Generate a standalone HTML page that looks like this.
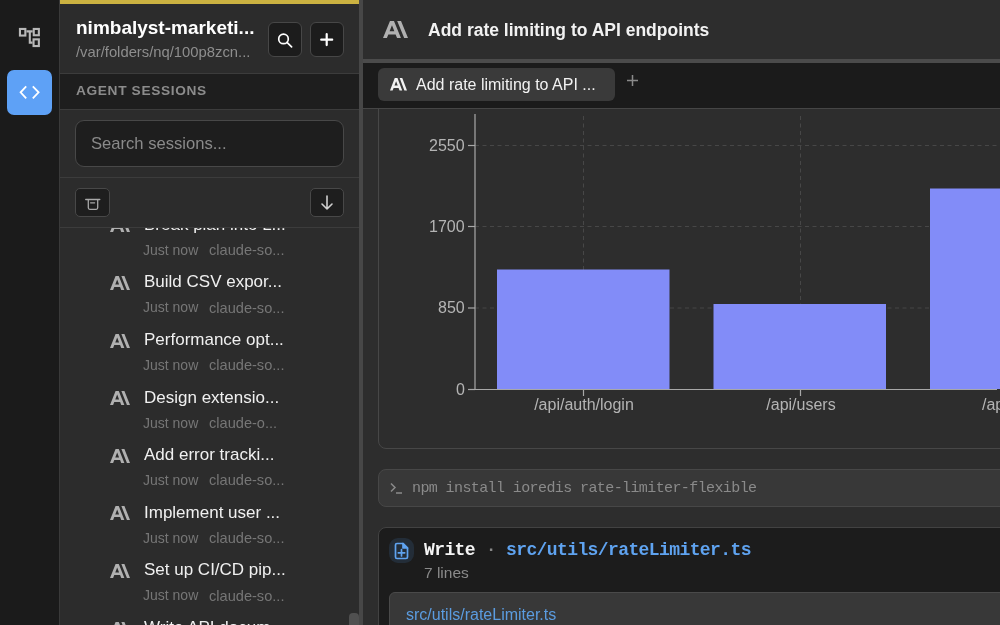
<!DOCTYPE html>
<html><head><meta charset="utf-8">
<style>
*{margin:0;padding:0;box-sizing:border-box}
html,body{width:1000px;height:625px;overflow:hidden;background:#2d2d2d;font-family:"Liberation Sans",sans-serif}
.a{position:absolute}
.nw{white-space:nowrap;will-change:transform}
</style></head><body>
<div class="a" style="left:0px;top:0px;width:59px;height:625px;background:#1b1b1b;"></div>
<div class="a" style="left:59px;top:0px;width:1px;height:625px;background:#3a3a3a;"></div>
<svg class="a" style="left:15px;top:24px" width="30" height="28" viewBox="15 24 30 28" fill="none" stroke="#b8b8b8" stroke-width="2.1">
<rect x="19.95" y="28.95" width="5.4" height="6.6"/><rect x="33.75" y="28.95" width="5.1" height="6.3"/><rect x="33.55" y="39.35" width="5.3" height="6.7"/>
<path d="M26.5 31.4H32.7M29.8 31.4V42.6H32.5"/></svg>
<div class="a" style="left:7px;top:70px;width:45px;height:45px;background:#5ea1f6;border-radius:7px"></div>
<svg class="a" style="left:19px;top:84px" width="22" height="17" viewBox="0 0 22 17" fill="none" stroke="#fff" stroke-width="1.8" stroke-linejoin="miter">
<path d="M7.2 2.3L1.6 8.3L7.2 14.3M13.8 2.3L19.6 8.3L13.8 14.3"/></svg>
<div class="a" style="left:60px;top:0px;width:299px;height:625px;background:#2c2c2c;"></div>
<svg class="a" style="left:110px;top:218.4px" width="20" height="14" viewBox="0 3.541 24 16.918" preserveAspectRatio="none"><path fill="#b0b0b0" d="M17.3041 3.541h-3.6718l6.696 16.918H24Zm-10.6082 0L0 20.459h3.7442l1.3693-3.5527h7.0052l1.3693 3.5528h3.7442L10.5363 3.5409Zm-.3712 10.2232 2.2914-5.9456 2.2914 5.9456Z"/></svg>
<div class="a nw" style="left:143.50px;top:214.71px;font-family:'Liberation Sans',sans-serif;font-size:17px;line-height:20px;font-weight:normal;color:#f0f0f0;">Break plan into L...</div>
<div class="a nw" style="left:143.20px;top:241.75px;font-family:'Liberation Sans',sans-serif;font-size:14px;line-height:17px;font-weight:normal;color:#767676;">Just now</div>
<div class="a nw" style="left:209.00px;top:241.04px;font-family:'Liberation Sans',sans-serif;font-size:14.6px;line-height:18px;font-weight:normal;color:#767676;">claude-so...</div>
<svg class="a" style="left:110px;top:276.0px" width="20" height="14" viewBox="0 3.541 24 16.918" preserveAspectRatio="none"><path fill="#b0b0b0" d="M17.3041 3.541h-3.6718l6.696 16.918H24Zm-10.6082 0L0 20.459h3.7442l1.3693-3.5527h7.0052l1.3693 3.5528h3.7442L10.5363 3.5409Zm-.3712 10.2232 2.2914-5.9456 2.2914 5.9456Z"/></svg>
<div class="a nw" style="left:143.50px;top:272.31px;font-family:'Liberation Sans',sans-serif;font-size:17px;line-height:20px;font-weight:normal;color:#f0f0f0;">Build CSV expor...</div>
<div class="a nw" style="left:143.20px;top:299.35px;font-family:'Liberation Sans',sans-serif;font-size:14px;line-height:17px;font-weight:normal;color:#767676;">Just now</div>
<div class="a nw" style="left:209.00px;top:298.64px;font-family:'Liberation Sans',sans-serif;font-size:14.6px;line-height:18px;font-weight:normal;color:#767676;">claude-so...</div>
<svg class="a" style="left:110px;top:333.6px" width="20" height="14" viewBox="0 3.541 24 16.918" preserveAspectRatio="none"><path fill="#b0b0b0" d="M17.3041 3.541h-3.6718l6.696 16.918H24Zm-10.6082 0L0 20.459h3.7442l1.3693-3.5527h7.0052l1.3693 3.5528h3.7442L10.5363 3.5409Zm-.3712 10.2232 2.2914-5.9456 2.2914 5.9456Z"/></svg>
<div class="a nw" style="left:143.50px;top:329.91px;font-family:'Liberation Sans',sans-serif;font-size:17px;line-height:20px;font-weight:normal;color:#f0f0f0;">Performance opt...</div>
<div class="a nw" style="left:143.20px;top:356.95px;font-family:'Liberation Sans',sans-serif;font-size:14px;line-height:17px;font-weight:normal;color:#767676;">Just now</div>
<div class="a nw" style="left:209.00px;top:356.24px;font-family:'Liberation Sans',sans-serif;font-size:14.6px;line-height:18px;font-weight:normal;color:#767676;">claude-so...</div>
<svg class="a" style="left:110px;top:391.2px" width="20" height="14" viewBox="0 3.541 24 16.918" preserveAspectRatio="none"><path fill="#b0b0b0" d="M17.3041 3.541h-3.6718l6.696 16.918H24Zm-10.6082 0L0 20.459h3.7442l1.3693-3.5527h7.0052l1.3693 3.5528h3.7442L10.5363 3.5409Zm-.3712 10.2232 2.2914-5.9456 2.2914 5.9456Z"/></svg>
<div class="a nw" style="left:143.50px;top:387.51px;font-family:'Liberation Sans',sans-serif;font-size:17px;line-height:20px;font-weight:normal;color:#f0f0f0;">Design extensio...</div>
<div class="a nw" style="left:143.20px;top:414.55px;font-family:'Liberation Sans',sans-serif;font-size:14px;line-height:17px;font-weight:normal;color:#767676;">Just now</div>
<div class="a nw" style="left:209.00px;top:413.84px;font-family:'Liberation Sans',sans-serif;font-size:14.6px;line-height:18px;font-weight:normal;color:#767676;">claude-o...</div>
<svg class="a" style="left:110px;top:448.8px" width="20" height="14" viewBox="0 3.541 24 16.918" preserveAspectRatio="none"><path fill="#b0b0b0" d="M17.3041 3.541h-3.6718l6.696 16.918H24Zm-10.6082 0L0 20.459h3.7442l1.3693-3.5527h7.0052l1.3693 3.5528h3.7442L10.5363 3.5409Zm-.3712 10.2232 2.2914-5.9456 2.2914 5.9456Z"/></svg>
<div class="a nw" style="left:143.50px;top:445.11px;font-family:'Liberation Sans',sans-serif;font-size:17px;line-height:20px;font-weight:normal;color:#f0f0f0;">Add error tracki...</div>
<div class="a nw" style="left:143.20px;top:472.15px;font-family:'Liberation Sans',sans-serif;font-size:14px;line-height:17px;font-weight:normal;color:#767676;">Just now</div>
<div class="a nw" style="left:209.00px;top:471.44px;font-family:'Liberation Sans',sans-serif;font-size:14.6px;line-height:18px;font-weight:normal;color:#767676;">claude-so...</div>
<svg class="a" style="left:110px;top:506.4px" width="20" height="14" viewBox="0 3.541 24 16.918" preserveAspectRatio="none"><path fill="#b0b0b0" d="M17.3041 3.541h-3.6718l6.696 16.918H24Zm-10.6082 0L0 20.459h3.7442l1.3693-3.5527h7.0052l1.3693 3.5528h3.7442L10.5363 3.5409Zm-.3712 10.2232 2.2914-5.9456 2.2914 5.9456Z"/></svg>
<div class="a nw" style="left:143.50px;top:502.71px;font-family:'Liberation Sans',sans-serif;font-size:17px;line-height:20px;font-weight:normal;color:#f0f0f0;">Implement user ...</div>
<div class="a nw" style="left:143.20px;top:529.75px;font-family:'Liberation Sans',sans-serif;font-size:14px;line-height:17px;font-weight:normal;color:#767676;">Just now</div>
<div class="a nw" style="left:209.00px;top:529.04px;font-family:'Liberation Sans',sans-serif;font-size:14.6px;line-height:18px;font-weight:normal;color:#767676;">claude-so...</div>
<svg class="a" style="left:110px;top:564.0px" width="20" height="14" viewBox="0 3.541 24 16.918" preserveAspectRatio="none"><path fill="#b0b0b0" d="M17.3041 3.541h-3.6718l6.696 16.918H24Zm-10.6082 0L0 20.459h3.7442l1.3693-3.5527h7.0052l1.3693 3.5528h3.7442L10.5363 3.5409Zm-.3712 10.2232 2.2914-5.9456 2.2914 5.9456Z"/></svg>
<div class="a nw" style="left:143.50px;top:560.31px;font-family:'Liberation Sans',sans-serif;font-size:17px;line-height:20px;font-weight:normal;color:#f0f0f0;">Set up CI/CD pip...</div>
<div class="a nw" style="left:143.20px;top:587.35px;font-family:'Liberation Sans',sans-serif;font-size:14px;line-height:17px;font-weight:normal;color:#767676;">Just now</div>
<div class="a nw" style="left:209.00px;top:586.64px;font-family:'Liberation Sans',sans-serif;font-size:14.6px;line-height:18px;font-weight:normal;color:#767676;">claude-so...</div>
<svg class="a" style="left:110px;top:621.6px" width="20" height="14" viewBox="0 3.541 24 16.918" preserveAspectRatio="none"><path fill="#b0b0b0" d="M17.3041 3.541h-3.6718l6.696 16.918H24Zm-10.6082 0L0 20.459h3.7442l1.3693-3.5527h7.0052l1.3693 3.5528h3.7442L10.5363 3.5409Zm-.3712 10.2232 2.2914-5.9456 2.2914 5.9456Z"/></svg>
<div class="a nw" style="left:143.50px;top:617.91px;font-family:'Liberation Sans',sans-serif;font-size:17px;line-height:20px;font-weight:normal;color:#f0f0f0;">Write API docum...</div>
<div class="a nw" style="left:143.20px;top:644.95px;font-family:'Liberation Sans',sans-serif;font-size:14px;line-height:17px;font-weight:normal;color:#767676;">Just now</div>
<div class="a nw" style="left:209.00px;top:644.24px;font-family:'Liberation Sans',sans-serif;font-size:14.6px;line-height:18px;font-weight:normal;color:#767676;">claude-so...</div>
<div class="a" style="left:60px;top:0px;width:299px;height:228px;background:#2c2c2c;"></div>
<div class="a" style="left:60px;top:0px;width:299px;height:4px;background:#cbb241;"></div>
<div class="a nw" style="left:76.00px;top:15.72px;font-family:'Liberation Sans',sans-serif;font-size:19px;line-height:23px;font-weight:bold;color:#fff;">nimbalyst-marketi...</div>
<div class="a nw" style="left:76.00px;top:43.47px;font-family:'Liberation Sans',sans-serif;font-size:14.8px;line-height:18px;font-weight:normal;color:#8e8e8e;">/var/folders/nq/100p8zcn...</div>
<div class="a" style="left:268px;top:22px;width:34px;height:35px;background:#1c1c1c;border:1px solid #474747;border-radius:6px"></div>
<svg class="a" style="left:276px;top:31px" width="18" height="18" viewBox="0 0 18 18" fill="none" stroke="#fff" stroke-width="1.7" stroke-linecap="round">
<circle cx="7.5" cy="7.9" r="4.8"/><path d="M11 11.4L15.6 15.8"/></svg>
<div class="a" style="left:310px;top:22px;width:34px;height:35px;background:#1c1c1c;border:1px solid #474747;border-radius:6px"></div>
<svg class="a" style="left:318px;top:31px" width="18" height="18" viewBox="0 0 18 18" fill="none" stroke="#fff" stroke-width="2.2" stroke-linecap="round">
<path d="M8.7 3.2V14.1M3.2 8.65H14.2"/></svg>
<div class="a" style="left:60px;top:73px;width:299px;height:1px;background:#3c3c3c;"></div>
<div class="a" style="left:60px;top:74px;width:299px;height:35px;background:#1e1e1e;"></div>
<div class="a nw" style="left:75.50px;top:83.45px;font-family:'Liberation Sans',sans-serif;font-size:13.7px;line-height:16px;font-weight:bold;color:#8c8c8c;letter-spacing:0.65px;">AGENT SESSIONS</div>
<div class="a" style="left:60px;top:109px;width:299px;height:1px;background:#3c3c3c;"></div>
<div class="a" style="left:75px;top:120px;width:269px;height:47px;background:#1e1e1e;border:1px solid #484848;border-radius:9px"></div>
<div class="a nw" style="left:91.00px;top:134.35px;font-family:'Liberation Sans',sans-serif;font-size:16.6px;line-height:20px;font-weight:normal;color:#8a8a8a;">Search sessions...</div>
<div class="a" style="left:60px;top:177px;width:299px;height:1px;background:#3c3c3c;"></div>
<div class="a" style="left:75px;top:188px;width:35px;height:29px;background:#1e1e1e;border:1px solid #484848;border-radius:5px"></div>
<svg class="a" style="left:80px;top:192px" width="25" height="22" viewBox="80 192 25 22" fill="none" stroke="#a8a8a8" stroke-width="1.3" stroke-linecap="round">
<path d="M85.7 199.5H99.8M88.3 199.8V207.8Q88.3 209.3 89.8 209.3H96.2Q97.7 209.3 97.7 207.8V199.8M90.6 202.8H94.6"/></svg>
<div class="a" style="left:310px;top:188px;width:34px;height:29px;background:#1e1e1e;border:1px solid #484848;border-radius:5px"></div>
<svg class="a" style="left:319px;top:194px" width="16" height="17" viewBox="0 0 16 17" fill="none" stroke="#d0d0d0" stroke-width="1.6" stroke-linecap="round" stroke-linejoin="round">
<path d="M8 2V15M3 10L8 15L13 10"/></svg>
<div class="a" style="left:60px;top:227px;width:299px;height:1px;background:#3c3c3c;"></div>
<div class="a" style="left:349px;top:612.5px;width:10px;height:20px;background:#505050;border-radius:4px"></div>
<div class="a" style="left:359px;top:0px;width:4px;height:625px;background:#474747;"></div>
<div class="a" style="left:378px;top:40px;width:700px;height:409px;background:#2d2d2d;border:1px solid #474747;border-radius:8px"></div>
<svg class="a" style="left:363px;top:109px" width="637" height="360" viewBox="363 109 637 360"><line x1="475" y1="145.5" x2="997" y2="145.5" stroke="#474747" stroke-width="1" stroke-dasharray="4 3.5"/><line x1="475" y1="226.5" x2="997" y2="226.5" stroke="#474747" stroke-width="1" stroke-dasharray="4 3.5"/><line x1="475" y1="308" x2="997" y2="308" stroke="#474747" stroke-width="1" stroke-dasharray="4 3.5"/><line x1="583.5" y1="116" x2="583.5" y2="389" stroke="#474747" stroke-width="1" stroke-dasharray="4 3.5"/><line x1="800.5" y1="116" x2="800.5" y2="389" stroke="#474747" stroke-width="1" stroke-dasharray="4 3.5"/><rect x="497" y="269.5" width="172.5" height="119.5" fill="#828cf8"/><rect x="713.5" y="304" width="172.5" height="85" fill="#828cf8"/><rect x="930" y="188.5" width="172.5" height="200.5" fill="#828cf8"/><line x1="475" y1="114" x2="475" y2="389.5" stroke="#a8a8a8" stroke-width="1.2"/><line x1="475" y1="389.5" x2="997" y2="389.5" stroke="#a8a8a8" stroke-width="1.2"/><line x1="468" y1="145.5" x2="475" y2="145.5" stroke="#a8a8a8" stroke-width="1.2"/><line x1="468" y1="226.5" x2="475" y2="226.5" stroke="#a8a8a8" stroke-width="1.2"/><line x1="468" y1="308" x2="475" y2="308" stroke="#a8a8a8" stroke-width="1.2"/><line x1="468" y1="389.5" x2="475" y2="389.5" stroke="#a8a8a8" stroke-width="1.2"/><line x1="583.5" y1="389.5" x2="583.5" y2="396" stroke="#a8a8a8" stroke-width="1.2"/><line x1="800.5" y1="389.5" x2="800.5" y2="396" stroke="#a8a8a8" stroke-width="1.2"/></svg>
<div class="a nw" style="right:535.50px;top:135.96px;font-family:'Liberation Sans',sans-serif;font-size:16px;line-height:19px;font-weight:normal;color:#b4b4b4;">2550</div>
<div class="a nw" style="right:535.50px;top:216.96px;font-family:'Liberation Sans',sans-serif;font-size:16px;line-height:19px;font-weight:normal;color:#b4b4b4;">1700</div>
<div class="a nw" style="right:535.50px;top:298.46px;font-family:'Liberation Sans',sans-serif;font-size:16px;line-height:19px;font-weight:normal;color:#b4b4b4;">850</div>
<div class="a nw" style="right:535.50px;top:379.96px;font-family:'Liberation Sans',sans-serif;font-size:16px;line-height:19px;font-weight:normal;color:#b4b4b4;">0</div>
<div class="a nw" style="left:283.50px;width:600px;text-align:center;top:394.66px;font-family:'Liberation Sans',sans-serif;font-size:16px;line-height:19px;font-weight:normal;color:#b4b4b4;">/api/auth/login</div>
<div class="a nw" style="left:500.50px;width:600px;text-align:center;top:394.66px;font-family:'Liberation Sans',sans-serif;font-size:16px;line-height:19px;font-weight:normal;color:#b4b4b4;">/api/users</div>
<div class="a nw" style="left:982.00px;top:394.66px;font-family:'Liberation Sans',sans-serif;font-size:16px;line-height:19px;font-weight:normal;color:#b4b4b4;">/api/reports</div>
<div class="a" style="left:378px;top:469px;width:640px;height:38px;background:#383838;border:1px solid #474747;border-radius:8px"></div>
<svg class="a" style="left:389px;top:481px" width="16" height="14" viewBox="0 0 16 14" fill="none" stroke="#8a8a8a" stroke-width="1.5">
<path d="M2 2.5L6 6.5L2 10.5M7 12H13"/></svg>
<div class="a nw" style="left:412.00px;top:480.01px;font-family:'Liberation Mono',monospace;font-size:15px;line-height:18px;font-weight:normal;color:#8a8a8a;letter-spacing:-0.6px;">npm install ioredis rate-limiter-flexible</div>
<div class="a" style="left:378px;top:527px;width:640px;height:140px;background:#1c1c1c;border:1px solid #424242;border-radius:8px"></div>
<div class="a" style="left:389px;top:538px;width:25px;height:25px;background:#232d38;border-radius:9px"></div>
<svg class="a" style="left:394px;top:542px" width="15" height="18" viewBox="0 0 15 18" fill="none" stroke="#5fa3f0" stroke-width="1.7" stroke-linejoin="round" stroke-linecap="round">
<path d="M1.5 3Q1.5 1.5 3 1.5H9L13.5 6V15Q13.5 16.5 12 16.5H3Q1.5 16.5 1.5 15Z M7.5 7.6V14 M4.3 10.8H10.7"/><path d="M9 1.5V6H13.5Z" fill="#5fa3f0"/></svg>
<div class="a nw" style="left:424.00px;top:539.01px;font-family:'Liberation Mono',monospace;font-size:18px;line-height:22px;font-weight:bold;color:#f4f4f4;letter-spacing:-0.6px;">Write</div>
<div class="a nw" style="left:486.00px;top:540.28px;font-family:'Liberation Mono',monospace;font-size:17px;line-height:20px;font-weight:bold;color:#888;">·</div>
<div class="a nw" style="left:506.00px;top:539.01px;font-family:'Liberation Mono',monospace;font-size:18px;line-height:22px;font-weight:bold;color:#5fa3f0;letter-spacing:-0.6px;">src/utils/rateLimiter.ts</div>
<div class="a nw" style="left:424.00px;top:563.13px;font-family:'Liberation Sans',sans-serif;font-size:15.5px;line-height:19px;font-weight:normal;color:#8a8a8a;">7 lines</div>
<div class="a" style="left:389px;top:592px;width:640px;height:60px;background:#383838;border:1px solid #4a4a4a;border-radius:6px"></div>
<div class="a nw" style="left:405.50px;top:604.76px;font-family:'Liberation Sans',sans-serif;font-size:16px;line-height:19px;font-weight:normal;color:#5b9ce0;">src/utils/rateLimiter.ts</div>
<div class="a" style="left:363px;top:0px;width:637px;height:59px;background:#2d2d2d;"></div>
<div class="a" style="left:363px;top:59px;width:637px;height:4px;background:#4b4b4b;"></div>
<div class="a" style="left:363px;top:63px;width:637px;height:45px;background:#1b1b1b;"></div>
<div class="a" style="left:363px;top:108px;width:637px;height:1px;background:#464646;"></div>
<svg class="a" style="left:383px;top:21px" width="25" height="17" viewBox="0 3.541 24 16.918" preserveAspectRatio="none"><path fill="#b0b0b0" d="M17.3041 3.541h-3.6718l6.696 16.918H24Zm-10.6082 0L0 20.459h3.7442l1.3693-3.5527h7.0052l1.3693 3.5528h3.7442L10.5363 3.5409Zm-.3712 10.2232 2.2914-5.9456 2.2914 5.9456Z"/></svg>
<div class="a nw" style="left:428.40px;top:19.64px;font-family:'Liberation Sans',sans-serif;font-size:17.5px;line-height:21px;font-weight:bold;color:#f2f2f2;">Add rate limiting to API endpoints</div>
<div class="a" style="left:378px;top:68px;width:237px;height:33px;background:#3a3a3a;border-radius:6px"></div>
<svg class="a" style="left:390px;top:78px" width="17" height="12.5" viewBox="0 3.541 24 16.918" preserveAspectRatio="none"><path fill="#f2f2f2" d="M17.3041 3.541h-3.6718l6.696 16.918H24Zm-10.6082 0L0 20.459h3.7442l1.3693-3.5527h7.0052l1.3693 3.5528h3.7442L10.5363 3.5409Zm-.3712 10.2232 2.2914-5.9456 2.2914 5.9456Z"/></svg>
<div class="a nw" style="left:416.00px;top:74.96px;font-family:'Liberation Sans',sans-serif;font-size:16px;line-height:19px;font-weight:normal;color:#f2f2f2;">Add rate limiting to API ...</div>
<svg class="a" style="left:626px;top:74px" width="13" height="13" viewBox="0 0 13 13" fill="none" stroke="#8a8a8a" stroke-width="1.5">
<path d="M6.5 1V12M1 6.5H12"/></svg>
</body></html>
